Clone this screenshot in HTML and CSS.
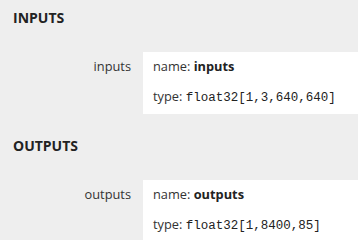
FILE: index.html
```html
<!DOCTYPE html>
<html lang="en">
<head>
  <meta charset="UTF-8">
  <meta name="viewport" content="width=device-width, initial-scale=1">
  <title>Model properties</title>
  <link rel="stylesheet" href="styles.css">
</head>
<body>

<div class="section">
  <div class="section-header">Inputs</div>
  <div class="item">
    <div class="item-name">inputs</div>
    <div class="item-value">
      <div class="value-line">name: <b>inputs</b></div>
      <div class="value-line">type: <code>float32[1,3,640,640]</code></div>
    </div>
  </div>
</div>

<div class="section">
  <div class="section-header">Outputs</div>
  <div class="item">
    <div class="item-name">outputs</div>
    <div class="item-value">
      <div class="value-line">name: <b>outputs</b></div>
      <div class="value-line">type: <code>float32[1,8400,85]</code></div>
    </div>
  </div>
</div>

</body>
</html>
```

FILE: styles.css
```css
body {
  margin: 0;
  padding: 0;
  background: #eeeeee;
  color: #333;
  font-family: "Open Sans", "Noto Sans", sans-serif;
  font-size: 12.8px;
}

.section {
  padding: 8px 0 14px 0;
}

.section-header {
  padding-left: 13px;
  font-size: 14px;
  font-weight: bold;
  line-height: 20px;
  text-transform: uppercase;
  color: #222;
}

.item {
  display: flex;
  gap: 12px;
  margin-top: 24px;
}

.item-name {
  width: 131px;
  flex-shrink: 0;
  text-align: right;
  padding-top: 4px;
  line-height: 21px;
}

.item-value {
  flex: 1;
  background: #fff;
}

.value-line {
  padding: 4px 9px 5px 10px;
  line-height: 21px;
  white-space: nowrap;
}

.value-line b {
  color: #222;
}

code {
  font-family: "Liberation Mono", monospace;
  font-size: 12.5px;
  color: #222;
}
```
